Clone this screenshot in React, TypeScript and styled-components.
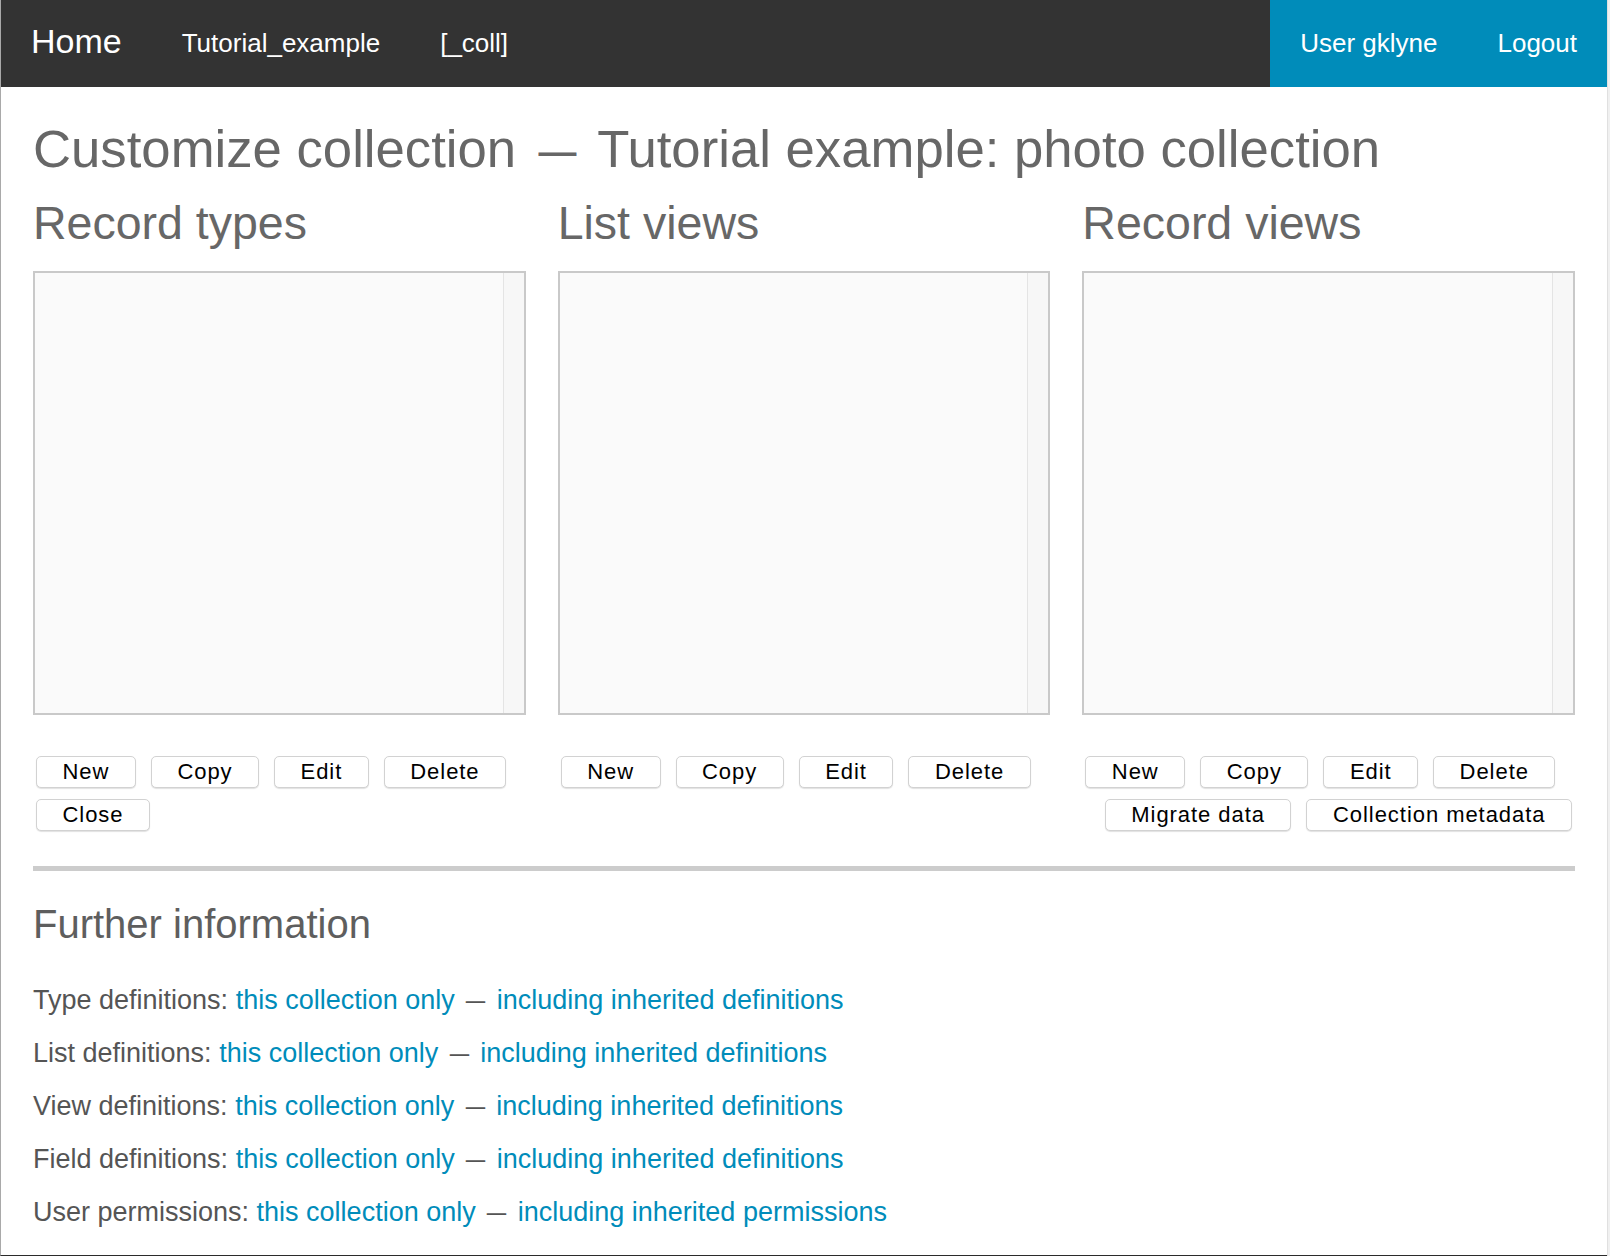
import React from 'react';
import styled, { createGlobalStyle } from 'styled-components';

const GlobalStyle = createGlobalStyle`
  html, body { margin: 0; padding: 0; background: #fff; }
  body { font-family: "Liberation Sans", Arial, Helvetica, sans-serif; }
  * { box-sizing: border-box; }
`;

const Frame = styled.div`
  display: flex;
  width: 1610px;
  height: 1256px;
  overflow: hidden;
`;

const Page = styled.div`
  flex: 1;
  display: flex;
  flex-direction: column;
  border-left: 1px solid #a9a9a9;
  border-bottom: 1px solid #2b2b2b;
  background: #fff;
`;

const ScrollEdge = styled.div`
  width: 3px;
  background: #f0f0f0;
  border-left: 1px solid #e0e0e0;
`;

const NavBar = styled.nav`
  height: 87px;
  background: #333333;
  display: flex;
  justify-content: space-between;
  align-items: stretch;
  flex-shrink: 0;
`;

const NavGroup = styled.div<{ $accent?: boolean }>`
  display: flex;
  align-items: center;
  background: ${(p) => (p.$accent ? '#008cba' : 'transparent')};
`;

const NavItem = styled.a<{ $title?: boolean }>`
  padding: 0 30px;
  color: #ffffff;
  text-decoration: none;
  font-size: ${(p) => (p.$title ? '34px' : '26px')};
  line-height: 1;
  margin-top: ${(p) => (p.$title ? '-5px' : '-2px')};
  white-space: nowrap;
`;

const Main = styled.main`
  padding: 0 32px;
  display: flex;
  flex-direction: column;
`;

const PageTitle = styled.h1`
  margin: 31px 0 0;
  font-size: 52.7px;
  line-height: 62px;
  font-weight: normal;
  color: #676767;
  white-space: nowrap;
`;

const Dash = styled.span`
  display: inline-block;
  transform: scaleX(0.72);
`;

const Columns = styled.div`
  display: grid;
  grid-template-columns: repeat(3, 1fr);
  column-gap: 32px;
  margin-top: 16px;
`;

const Column = styled.section`
  display: flex;
  flex-direction: column;
  min-width: 0;
`;

const ColumnHeading = styled.h2`
  margin: 0 0 20px;
  font-size: 46.5px;
  line-height: 55px;
  font-weight: normal;
  color: #676767;
`;

const ListBox = styled.div`
  height: 444px;
  border: 2px solid #c9c9c9;
  background: #fafafa;
  display: flex;
  justify-content: flex-end;
`;

const ScrollTrack = styled.div`
  width: 21px;
  border-left: 1px solid #e4e4e4;
  background: #f7f7f7;
`;

const ButtonArea = styled.div`
  margin-top: 41px;
  display: flex;
  flex-direction: column;
  gap: 11px;
  padding: 0 3px;
`;

const ButtonRow = styled.div<{ $end?: boolean }>`
  display: flex;
  gap: 15px;
  justify-content: ${(p) => (p.$end ? 'flex-end' : 'flex-start')};
`;

const Button = styled.button`
  height: 32px;
  padding: 0 25.5px;
  border: 1px solid #d2d2d2;
  border-radius: 5px;
  background: #ffffff;
  box-shadow: 0 1px 1px rgba(0, 0, 0, 0.12);
  font-family: "Liberation Sans", Arial, Helvetica, sans-serif;
  font-size: 22px;
  letter-spacing: 0.95px;
  color: #000000;
  line-height: 1;
  white-space: nowrap;
  cursor: pointer;
`;

const Rule = styled.hr`
  margin: 35px 0 0;
  height: 5px;
  border: none;
  background: #cccccc;
`;

const SubHeading = styled.h3`
  margin: 29px 0 0;
  font-size: 40px;
  line-height: 48px;
  font-weight: normal;
  color: #5e5e5e;
`;

const InfoList = styled.div`
  margin-top: 26px;
  display: flex;
  flex-direction: column;
`;

const InfoLine = styled.p`
  margin: 0;
  font-size: 27px;
  line-height: 53px;
  color: #555555;
  white-space: nowrap;
`;

const InfoLink = styled.a`
  color: #008cba;
  text-decoration: none;
`;

type ColumnDef = {
  title: string;
  rows: { labels: string[]; end?: boolean }[];
};

const columns: ColumnDef[] = [
  {
    title: 'Record types',
    rows: [{ labels: ['New', 'Copy', 'Edit', 'Delete'] }, { labels: ['Close'] }],
  },
  {
    title: 'List views',
    rows: [{ labels: ['New', 'Copy', 'Edit', 'Delete'] }],
  },
  {
    title: 'Record views',
    rows: [
      { labels: ['New', 'Copy', 'Edit', 'Delete'] },
      { labels: ['Migrate data', 'Collection metadata'], end: true },
    ],
  },
];

const infoLines = [
  { label: 'Type definitions:', last: 'including inherited definitions' },
  { label: 'List definitions:', last: 'including inherited definitions' },
  { label: 'View definitions:', last: 'including inherited definitions' },
  { label: 'Field definitions:', last: 'including inherited definitions' },
  { label: 'User permissions:', last: 'including inherited permissions' },
];

export default function App() {
  return (
    <>
      <GlobalStyle />
      <Frame>
        <Page>
          <NavBar>
            <NavGroup>
              <NavItem $title href="#">Home</NavItem>
              <NavItem href="#">Tutorial_example</NavItem>
              <NavItem href="#">[_coll]</NavItem>
            </NavGroup>
            <NavGroup $accent>
              <NavItem href="#">User gklyne</NavItem>
              <NavItem href="#">Logout</NavItem>
            </NavGroup>
          </NavBar>
          <Main>
            <PageTitle>
              Customize collection <Dash>—</Dash> Tutorial example: photo collection
            </PageTitle>
            <Columns>
              {columns.map((col) => (
                <Column key={col.title}>
                  <ColumnHeading>{col.title}</ColumnHeading>
                  <ListBox>
                    <ScrollTrack />
                  </ListBox>
                  <ButtonArea>
                    {col.rows.map((row, i) => (
                      <ButtonRow key={i} $end={row.end}>
                        {row.labels.map((l) => (
                          <Button key={l} type="button">{l}</Button>
                        ))}
                      </ButtonRow>
                    ))}
                  </ButtonArea>
                </Column>
              ))}
            </Columns>
            <Rule />
            <SubHeading>Further information</SubHeading>
            <InfoList>
              {infoLines.map((line) => (
                <InfoLine key={line.label}>
                  {line.label} <InfoLink href="#">this collection only</InfoLink> <Dash>—</Dash>{' '}
                  <InfoLink href="#">{line.last}</InfoLink>
                </InfoLine>
              ))}
            </InfoList>
          </Main>
        </Page>
        <ScrollEdge />
      </Frame>
    </>
  );
}
